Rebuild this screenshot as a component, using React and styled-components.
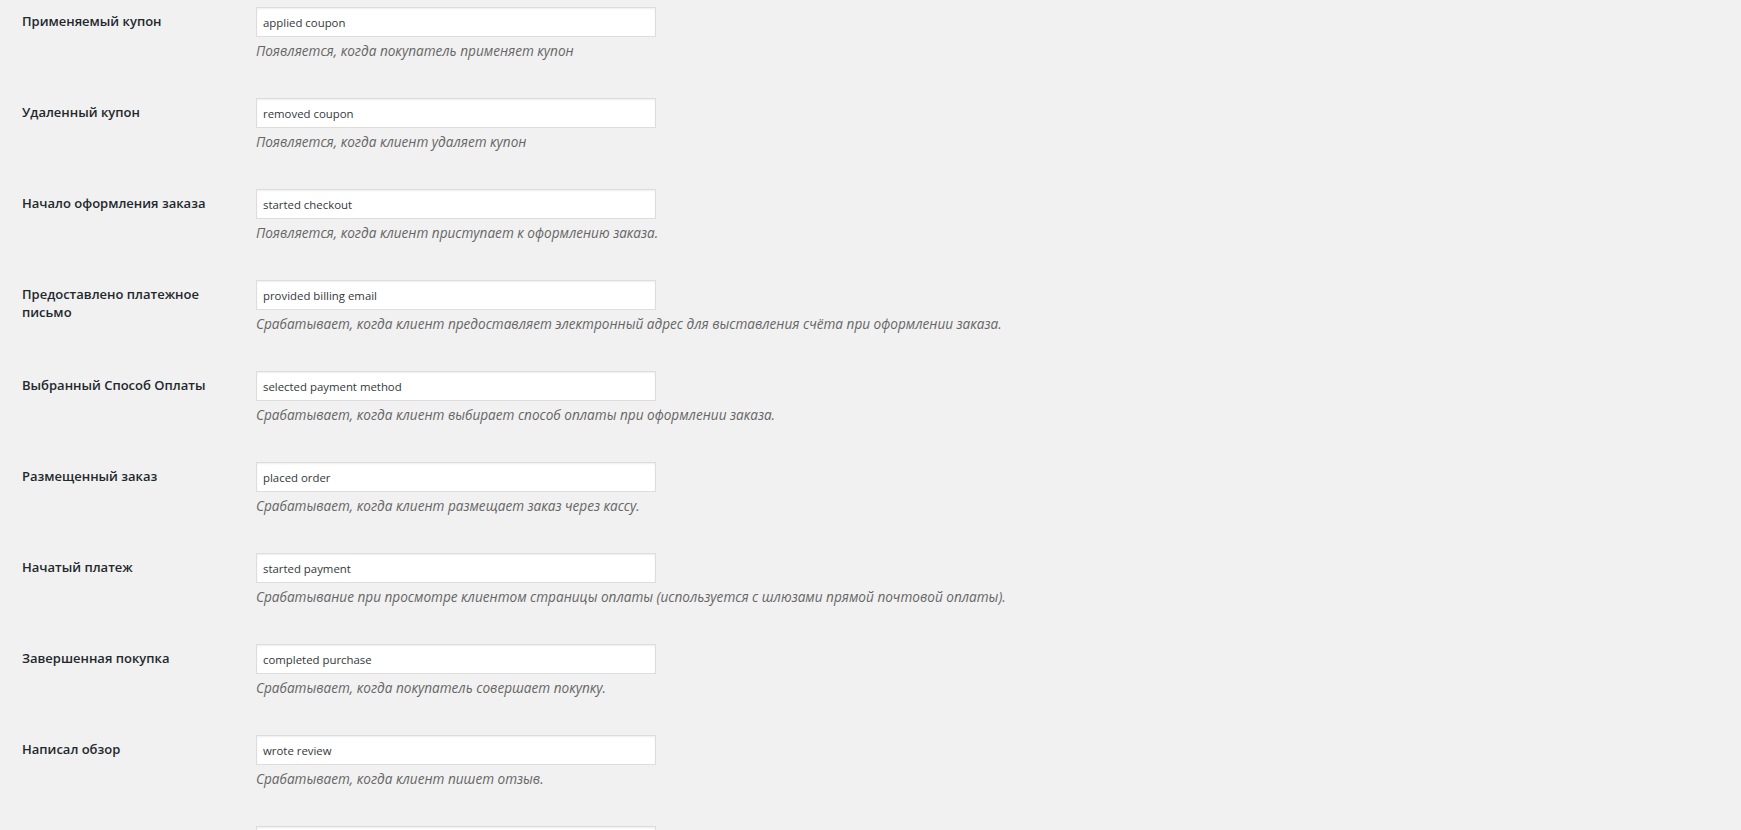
import React from 'react';
import styled, { createGlobalStyle } from 'styled-components';

const GlobalStyle = createGlobalStyle`
  html, body {
    margin: 0;
    padding: 0;
    background: #f1f1f1;
    overflow: hidden;
  }
  body {
    font-family: 'Open Sans', 'Noto Sans', sans-serif;
    color: #23282d;
  }
`;

const Page = styled.div`
  height: 100vh;
  overflow: hidden;
  background: #f1f1f1;
  padding-left: 22px;
  box-sizing: border-box;
`;

// page is scrolled a bit, so the first row starts above the window
const FormTable = styled.div`
  margin-top: -8px;
  display: flex;
  flex-direction: column;
`;

const Row = styled.div`
  display: grid;
  grid-template-columns: 234px 1fr;
  height: 91px;
  box-sizing: border-box;
`;

const Label = styled.label`
  padding-top: 20px;
  padding-right: 20px;
  font-size: 13px;
  font-weight: 600;
  line-height: 18px;
  color: #23282d;
`;

const Field = styled.div`
  padding-top: 15px;
  display: flex;
  flex-direction: column;
  align-items: flex-start;
`;

const TextInput = styled.input`
  width: 400px;
  height: 30px;
  box-sizing: border-box;
  margin: 0;
  padding: 3px 6px;
  border: 1px solid #ddd;
  box-shadow: inset 0 1px 2px rgba(0, 0, 0, 0.07);
  background: #fff;
  color: #32373c;
  font-family: 'Open Sans', 'Noto Sans', sans-serif;
  font-size: 11.4px;
  outline: none;
`;

const Description = styled.p`
  margin: 4px 0 0;
  font-size: 13.6px;
  font-style: italic;
  line-height: 20px;
  color: #666;
`;

const events = [
  ['Применяемый купон', 'applied coupon', 'Появляется, когда покупатель применяет купон'],
  ['Удаленный купон', 'removed coupon', 'Появляется, когда клиент удаляет купон'],
  ['Начало оформления заказа', 'started checkout', 'Появляется, когда клиент приступает к оформлению заказа.'],
  ['Предоставлено платежное письмо', 'provided billing email', 'Срабатывает, когда клиент предоставляет электронный адрес для выставления счёта при оформлении заказа.'],
  ['Выбранный Способ Оплаты', 'selected payment method', 'Срабатывает, когда клиент выбирает способ оплаты при оформлении заказа.'],
  ['Размещенный заказ', 'placed order', 'Срабатывает, когда клиент размещает заказ через кассу.'],
  ['Начатый платеж', 'started payment', 'Срабатывание при просмотре клиентом страницы оплаты (используется с шлюзами прямой почтовой оплаты).'],
  ['Завершенная покупка', 'completed purchase', 'Срабатывает, когда покупатель совершает покупку.'],
  ['Написал обзор', 'wrote review', 'Срабатывает, когда клиент пишет отзыв.'],
  // next row is scrolled below the window, only its input edge shows
  ['', '', ''],
];

const App = () => {
  return (
    <Page>
      <GlobalStyle />
      <FormTable>
        {events.map(([label, value, desc], i) => (
          <Row key={i}>
            <Label htmlFor={'ev' + i}>{label}</Label>
            <Field>
              <TextInput id={'ev' + i} type="text" defaultValue={value} />
              {desc && <Description>{desc}</Description>}
            </Field>
          </Row>
        ))}
      </FormTable>
    </Page>
  );
};

export default App;
